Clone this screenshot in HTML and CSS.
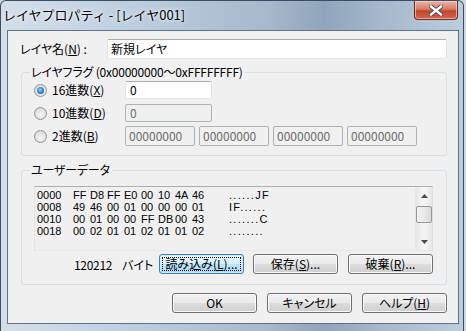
FILE: index.html
```html
<!DOCTYPE html>
<html lang="ja">
<head>
    <meta charset="UTF-8">
    <title>レイヤプロパティ</title>
    <link rel="stylesheet" href="styles.css">
</head>
<body>
    <div class="window">
        <!-- Title bar -->
        <div class="titlebar">
            <span class="title">レイヤプロパティ - [レイヤ001]</span>
            <div class="close-btn">
                <svg width="14" height="11" viewBox="0 0 14 11">
                    <path d="M2 1.5 L12 9.5 M12 1.5 L2 9.5" stroke="#3b4350" stroke-width="4.2" stroke-linecap="square"/>
                    <path d="M2 1.5 L12 9.5 M12 1.5 L2 9.5" stroke="#fff" stroke-width="2.4" stroke-linecap="square"/>
                </svg>
            </div>
        </div>

        <!-- Dialog client area -->
        <div class="client">
            <div class="name-row">
                <span class="name-label">レイヤ名(<u>N</u>) :</span>
                <div class="textbox name-box">新規レイヤ</div>
            </div>

            <fieldset class="group flags">
                <legend>レイヤフラグ (0x00000000～0xFFFFFFFF)</legend>
                <div class="radio-row">
                    <span class="radio on"><span class="dot"></span></span>
                    <span class="radio-label">16進数(<u>X</u>)</span>
                    <div class="textbox num-box">0</div>
                </div>
                <div class="radio-row">
                    <span class="radio"></span>
                    <span class="radio-label">10進数(<u>D</u>)</span>
                    <div class="textbox num-box disabled">0</div>
                </div>
                <div class="radio-row">
                    <span class="radio"></span>
                    <span class="radio-label">2進数(<u>B</u>)</span>
                    <div class="bits">
                        <div class="textbox bit-box disabled">00000000</div>
                        <div class="textbox bit-box disabled">00000000</div>
                        <div class="textbox bit-box disabled">00000000</div>
                        <div class="textbox bit-box disabled">00000000</div>
                    </div>
                </div>
            </fieldset>

            <fieldset class="group userdata">
                <legend>ユーザーデータ</legend>
                <div class="hexview">
                    <div class="hexlines">
                        <div class="hexline"><span>0000</span><span>FF</span><span>D8</span><span>FF</span><span>E0</span><span>00</span><span>10</span><span>4A</span><span>46</span><span>......JF</span></div>
                        <div class="hexline"><span>0008</span><span>49</span><span>46</span><span>00</span><span>01</span><span>00</span><span>00</span><span>00</span><span>01</span><span>IF......</span></div>
                        <div class="hexline"><span>0010</span><span>00</span><span>01</span><span>00</span><span>00</span><span>FF</span><span>DB</span><span>00</span><span>43</span><span>.......C</span></div>
                        <div class="hexline"><span>0018</span><span>00</span><span>02</span><span>01</span><span>01</span><span>02</span><span>01</span><span>01</span><span>02</span><span>........</span></div>
                    </div>
                    <div class="scrollbar">
                        <div class="sb-arrow">
                            <svg width="7" height="4" viewBox="0 0 7 4"><polygon points="0,4 3.5,0 7,4" fill="#4a4a4a"/></svg>
                        </div>
                        <div class="sb-thumb"></div>
                        <div class="sb-track"></div>
                        <div class="sb-arrow">
                            <svg width="7" height="4" viewBox="0 0 7 4"><polygon points="0,0 7,0 3.5,4" fill="#4a4a4a"/></svg>
                        </div>
                    </div>
                </div>
                <div class="data-row">
                    <span class="size">120212</span>
                    <span class="unit">バイト</span>
                    <button class="btn focused"><span class="focus-ring">読み込み(<u>L</u>)...</span></button>
                    <button class="btn">保存(<u>S</u>)...</button>
                    <button class="btn">破棄(<u>R</u>)...</button>
                </div>
            </fieldset>

            <div class="dialog-buttons">
                <button class="btn">OK</button>
                <button class="btn">キャンセル</button>
                <button class="btn">ヘルプ(<u>H</u>)</button>
            </div>
        </div>
    </div>
</body>
</html>
```

FILE: styles.css
```css
* { box-sizing: border-box; }
body { margin: 0; width: 466px; height: 331px; overflow: hidden; background: #cfd6de; font-family: "Noto Sans CJK JP", sans-serif; font-size: 12px; font-feature-settings: "palt"; color: #000; }
u { text-decoration: underline; text-underline-offset: 1px; }

/* Window frame */
.window { width: 464px; height: 331px; border: 1px solid #3a4d62; border-bottom: none; border-radius: 6px 6px 0 0; padding: 0 4px 7px 6px; display: flex; flex-direction: column;
    background: linear-gradient(90deg, #d3dee9 0%, #c6d5e4 18%, #b5c7d9 38%, #a6b8cb 58%, #90a5bb 70%, #a5b8cc 82%, #bccddd 100%); }

/* Title bar */
.titlebar { height: 29px; display: flex; align-items: flex-start; justify-content: space-between; }
.title { margin: 6px 0 0 -4px; font-size: 13px; line-height: 16px; font-feature-settings: normal; text-shadow: 0 0 6px rgba(255,255,255,0.9), 0 0 3px rgba(255,255,255,0.9); }
.close-btn { width: 44px; height: 19px; margin: 0 1px 0 0; display: flex; align-items: center; justify-content: center; border: 1px solid #6e2c22; border-top: none; border-radius: 0 0 4px 4px;
    background: linear-gradient(#eab4a8 0%, #d97d68 45%, #c4452a 55%, #d2664a 100%); box-shadow: inset 0 0 0 1px rgba(255,220,210,0.6); }

/* Client area */
.client { flex-grow: 1; background: #f0f0f0; border: 1px solid #5f748b; padding: 8px 11px 0 12px; display: flex; flex-direction: column; }

.name-row { display: flex; align-items: center; height: 20px; }
.name-label { width: 87px; line-height: 14px; }
.textbox { height: 19px; background: #fff; border: 1px solid; border-color: #abadb3 #dbdfe6 #e3e9ef #e2e3ea; border-radius: 2px; padding: 0 4px; line-height: 17px; white-space: nowrap; }
.name-box { flex-grow: 1; height: 20px; line-height: 18px; padding-left: 3px; }
.textbox.disabled { background: #f0f0f0; border-color: #adb2b5; color: #6d6d6d; }

/* Group boxes */
.group { margin: 6px 0 0 1px; padding: 1px 12px 9px 12px; border: 1px solid #d5dfe5; border-radius: 3px; min-width: 0; }
.group legend { margin-left: -4px; padding: 0 2px 0 1px; line-height: 14px; letter-spacing: -0.2px; }

.radio-row { display: flex; align-items: center; height: 20px; margin-bottom: 3px; }
.radio-row:last-child { margin-bottom: 0; }
.radio { width: 13px; height: 13px; border-radius: 50%; border: 1px solid #949494; background: radial-gradient(circle at 50% 60%, #f6f6f6 0%, #e2e2e2 55%, #cfcfcf 100%); display: flex; align-items: center; justify-content: center; }
.radio .dot { width: 7px; height: 7px; border-radius: 50%; background: radial-gradient(circle at 45% 40%, #9ad4fb 0%, #3a8fd6 45%, #19528a 100%); }
.radio-label { width: 73px; margin-left: 5px; line-height: 14px; }
.num-box { width: 87px; height: 18px; line-height: 16px; }
.bits { display: flex; gap: 4px; }
.bit-box { width: 70px; height: 20px; line-height: 18px; padding-left: 3px; }

/* User data */
.userdata { margin-top: 7px; padding: 9px 13px 10px 12px; }
.hexview { height: 65px; display: flex; background: #f0f0f0; border: 1px solid; border-color: #abadb3 #dbdfe6 #e3e9ef #e2e3ea; }
.hexlines { flex-grow: 1; padding: 2px 0 0 2px; font-family: "Liberation Sans", sans-serif; font-size: 11px; }
.hexline { display: grid; grid-template-columns: 36px repeat(7, 17px) 37px auto; height: 12px; line-height: 12px; white-space: pre; font-feature-settings: normal; }
.hexline span:last-child { letter-spacing: 1.3px; }

.scrollbar { width: 17px; display: flex; flex-direction: column; background: linear-gradient(90deg, #e6e6e6, #f4f4f4 40%, #f4f4f4 60%, #e6e6e6); border-left: 1px solid #e8e8e8; }
.sb-arrow { height: 17px; display: flex; align-items: center; justify-content: center; }
.sb-thumb { height: 17px; margin-top: 2px; border: 1px solid #979797; border-radius: 2px; background: linear-gradient(90deg, #f4f4f4, #e9e9e9 50%, #d9d9d9); }
.sb-track { flex-grow: 1; }

.data-row { display: flex; align-items: center; margin-top: 3px; height: 20px; }
.size { margin-left: 40px; margin-right: 10px; letter-spacing: -0.3px; }
.data-row .btn { margin-left: 10px; }
.data-row .btn.focused { margin-left: auto; }
.data-row .btn:nth-of-type(2) { margin-left: 9px; }

/* Buttons */
.btn { width: 85px; height: 20px; padding: 0; font: inherit; color: #000; border: 1px solid #707070; border-radius: 3px; display: flex; align-items: center; justify-content: center; line-height: 14px;
    background: linear-gradient(#f2f2f2 0%, #ebebeb 49%, #dddddd 51%, #cfcfcf 100%); box-shadow: inset 0 0 0 1px #fafafa; }
.btn.focused { border-color: #3c7fb1; background: linear-gradient(#eaf6fd 0%, #d9f0fc 49%, #bee6fd 51%, #a7d9f5 100%); box-shadow: inset 0 0 0 1px #c9ebfb; padding: 2px; }
.focus-ring { flex-grow: 1; align-self: stretch; display: flex; align-items: center; justify-content: center; border: 1px dotted #000; }

.dialog-buttons { display: flex; justify-content: flex-end; gap: 10px; margin-top: 8px; }
```
